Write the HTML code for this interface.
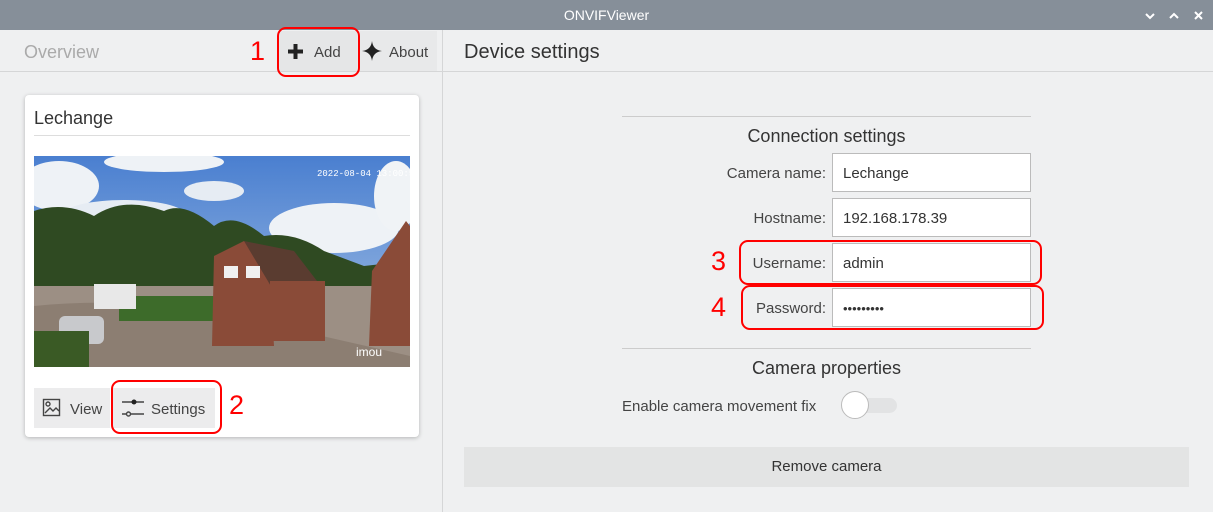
<!DOCTYPE html>
<html><head><meta charset="utf-8"><style>
*{margin:0;padding:0;box-sizing:border-box}
body{width:1213px;height:512px;overflow:hidden;background:#eff0f1;font-family:"Liberation Sans",sans-serif;position:relative;color:#333}
.a{position:absolute}
.red{border:2.5px solid #f00;border-radius:9px}
.rn{color:#f00;font-size:27px}
.lbl{font-size:15px;color:#444;text-align:right;width:200px;left:626px}
.inp{left:832px;width:199px;height:39px;background:#fff;border:1px solid #bbb;font-size:15px;padding-left:10px;line-height:39px;color:#333}
</style></head><body>
<div class="a" style="left:0;top:0;width:1213px;height:30px;background:#868f99"></div>
<div class="a" style="left:0;top:7px;width:1213px;text-align:center;color:#fff;font-size:14px">ONVIFViewer</div>
<svg class="a" style="left:1140px;top:10px" width="70" height="12" viewBox="0 0 70 12"><g stroke="#fff" stroke-width="2" fill="none"><path d="M6 4l4 4 4-4"/><path d="M30 8l4-4 4 4"/><path d="M55 2l7 7M62 2l-7 7"/></g></svg>
<div class="a" style="left:0;top:71px;width:442px;height:1px;background:#d5d6d7"></div>
<div class="a" style="left:442px;top:30px;width:1px;height:482px;background:#d5d6d7"></div>
<div class="a" style="left:443px;top:71px;width:770px;height:1px;background:#d5d6d7"></div>
<div class="a" style="left:24px;top:42px;font-size:18px;color:#aaa">Overview</div>
<div class="a" style="left:279px;top:31px;width:78px;height:40px;background:#e5e6e7"></div>
<div class="a" style="left:357px;top:31px;width:80px;height:40px;background:#e8e9ea"></div>
<svg class="a" style="left:288px;top:44px" width="15" height="15" viewBox="0 0 15 15"><path d="M5.5 0h4v5.5H15v4H9.5V15h-4V9.5H0v-4h5.5z" fill="#222"/></svg>
<div class="a" style="left:314px;top:44px;font-size:15px;color:#444">Add</div>
<svg class="a" style="left:362px;top:41px" width="20" height="20" viewBox="0 0 20 20"><path d="M10 0Q11 9 20 10Q11 11 10 20Q9 11 0 10Q9 9 10 0z" fill="#222"/></svg>
<div class="a" style="left:389px;top:44px;font-size:15px;color:#444">About</div>
<div class="a red" style="left:277px;top:27px;width:83px;height:50px"></div>
<div class="a rn" style="left:250px;top:36px">1</div>
<div class="a" style="left:25px;top:95px;width:394px;height:342px;background:#fff;border-radius:4px;box-shadow:0 1px 4px rgba(0,0,0,.25)"></div>
<div class="a" style="left:34px;top:108px;font-size:18px;color:#333">Lechange</div>
<div class="a" style="left:34px;top:135px;width:376px;height:1px;background:#ddd"></div>
<svg class="a" style="left:34px;top:156px" width="376" height="211" viewBox="0 0 376 211">
<defs><linearGradient id="sk" x1="0" y1="0" x2="0" y2="1"><stop offset="0" stop-color="#4a7fd0"/><stop offset="1" stop-color="#a9c4e6"/></linearGradient></defs>
<rect width="376" height="211" fill="url(#sk)"/>
<ellipse cx="25" cy="30" rx="40" ry="25" fill="#eef2f6"/><ellipse cx="90" cy="58" rx="60" ry="14" fill="#e6ecf3"/><ellipse cx="130" cy="6" rx="60" ry="10" fill="#eef2f6"/><ellipse cx="300" cy="72" rx="65" ry="25" fill="#eef2f6"/><ellipse cx="362" cy="40" rx="22" ry="35" fill="#f0f3f6"/><ellipse cx="180" cy="35" rx="30" ry="10" fill="#e6ecf3"/>
<path d="M0 55Q30 45 60 60Q90 40 130 55Q150 45 180 70Q200 55 230 80Q260 75 290 95L330 110L376 105V175H0z" fill="#2f4a22"/>
<rect x="0" y="130" width="376" height="81" fill="#9c8f84"/>
<path d="M0 150Q100 140 200 160L376 200V211H0z" fill="#8c7e72"/>
<rect x="85" y="140" width="100" height="25" fill="#3d6b2a"/>
<rect x="60" y="128" width="42" height="25" fill="#e8e8e8"/>
<path d="M180 100L210 85L235 105L240 190L178 190z" fill="#8a4b38"/>
<path d="M210 85L260 95L283 125L238 132z" fill="#5a3c30"/>
<rect x="236" y="125" width="55" height="60" fill="#8a4b38"/>
<rect x="190" y="110" width="14" height="12" fill="#f0f0f0"/><rect x="212" y="110" width="14" height="12" fill="#f0f0f0"/>
<path d="M338 115L372 65L376 70V190H335z" fill="#8a4b38"/>
<rect x="25" y="160" width="45" height="28" rx="6" fill="#c8c9cc"/>
<rect x="0" y="175" width="55" height="36" fill="#3a5a25"/>
<text x="283" y="20" font-size="9" fill="#fff" font-family="Liberation Mono">2022-08-04 13:00:52</text>
<text x="322" y="200" font-size="12" fill="#fff" font-family="Liberation Sans">imou</text>
</svg>
<div class="a" style="left:34px;top:388px;width:76px;height:40px;background:#ececed"></div>
<div class="a" style="left:113px;top:388px;width:102px;height:40px;background:#ececed"></div>
<svg class="a" style="left:42px;top:398px" width="20" height="20" viewBox="0 0 20 20"><g fill="none" stroke="#444" stroke-width="1.4"><rect x="1.5" y="1.5" width="16" height="16"/><circle cx="6" cy="6" r="2"/><path d="M3 15l5-5 3 3 3-3 3 3"/></g></svg>
<div class="a" style="left:70px;top:401px;font-size:15px;color:#444">View</div>
<svg class="a" style="left:122px;top:398px" width="22" height="20" viewBox="0 0 22 20"><g stroke="#444" stroke-width="1.4" fill="none"><path d="M0 4h22M0 16h4M9 16h13"/><circle cx="6.5" cy="16" r="2"/></g><circle cx="12" cy="4" r="2.5" fill="#222"/></svg>
<div class="a" style="left:151px;top:401px;font-size:15px;color:#444">Settings</div>
<div class="a red" style="left:111px;top:380px;width:111px;height:54px"></div>
<div class="a rn" style="left:229px;top:390px">2</div>
<div class="a" style="left:464px;top:41px;font-size:20px;color:#333">Device settings</div>
<div class="a" style="left:622px;top:116px;width:409px;height:1px;background:#ccc"></div>
<div class="a" style="left:622px;top:126px;width:409px;text-align:center;font-size:18px;color:#333">Connection settings</div>
<div class="a lbl" style="top:165px">Camera name:</div>
<div class="a inp" style="top:153px">Lechange</div>
<div class="a lbl" style="top:210px">Hostname:</div>
<div class="a inp" style="top:198px">192.168.178.39</div>
<div class="a lbl" style="top:255px">Username:</div>
<div class="a inp" style="top:243px">admin</div>
<div class="a lbl" style="top:300px">Password:</div>
<div class="a inp" style="top:288px;font-size:13px">•••••••••</div>
<div class="a red" style="left:739px;top:240px;width:303px;height:45px"></div>
<div class="a red" style="left:741px;top:285px;width:303px;height:45px"></div>
<div class="a rn" style="left:711px;top:246px">3</div>
<div class="a rn" style="left:711px;top:292px">4</div>
<div class="a" style="left:622px;top:348px;width:409px;height:1px;background:#ccc"></div>
<div class="a" style="left:622px;top:358px;width:409px;text-align:center;font-size:18px;color:#333">Camera properties</div>
<div class="a" style="left:622px;top:398px;font-size:15px;color:#444">Enable camera movement fix</div>
<div class="a" style="left:846px;top:398px;width:51px;height:15px;border-radius:8px;background:#e2e3e4"></div>
<div class="a" style="left:841px;top:391px;width:28px;height:28px;border-radius:50%;background:#fff;border:1px solid #bbb"></div>
<div class="a" style="left:464px;top:447px;width:725px;height:40px;background:#e3e4e4;text-align:center;line-height:40px;font-size:15px;color:#333">Remove camera</div>
</body></html>
